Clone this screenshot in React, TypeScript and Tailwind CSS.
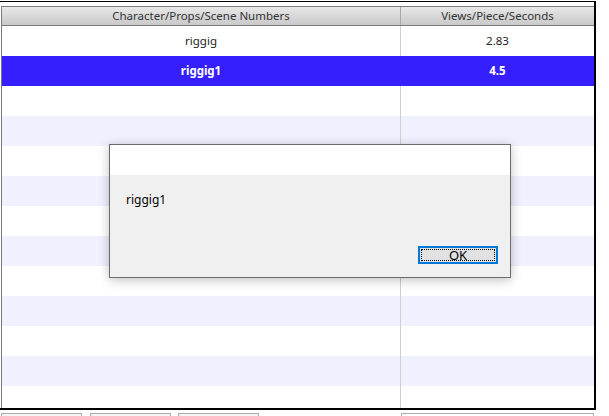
import React from "react";

interface Row {
  name: string;
  value: string;
}

const rows: Row[] = [
  { name: "riggig", value: "2.83" },
  { name: "riggig1", value: "4.5" },
];

const selectedIndex = 1;
const totalRows = 13;

export default function App() {
  const cells = Array.from({ length: totalRows }, (_, i) => rows[i] ?? null);

  return (
    <div
      className="relative w-[609px] h-[416px] overflow-hidden bg-white text-[11.5px] text-[#222]"
      style={{ fontFamily: '"Noto Sans", "Open Sans", sans-serif' }}
    >
      {/* table frame */}
      <div className="mt-px w-[596px] h-[409px] border-t border-r-2 border-b-2 border-black pt-[4px] overflow-hidden">
        <div className="ml-px h-full border-l border-t border-[#7a7a7a] overflow-hidden">
          {/* header */}
          <div className="grid grid-cols-[399px_1fr] h-[19px] border-b border-[#7a7a7a] bg-gradient-to-b from-[#e8e8e8] to-[#c9c9c9] text-[#333]">
            <div className="flex items-center justify-center border-r border-[#a9a9a9]">
              Character/Props/Scene Numbers
            </div>
            <div className="flex items-center justify-center">Views/Piece/Seconds</div>
          </div>

          {/* body */}
          {cells.map((row, i) => {
            const selected = i === selectedIndex;
            const bg = selected ? "bg-[#361fff]" : i % 2 === 1 ? "bg-[#f0f0fe]" : "bg-white";
            return (
              <div key={i} className={`grid grid-cols-[399px_1fr] h-[30px] ${bg}`}>
                <div
                  className={`flex items-center justify-center border-r ${
                    selected ? "border-[#361fff] text-white font-bold" : "border-[#cfcfcf]"
                  }`}
                >
                  {row?.name}
                </div>
                <div className={`flex items-center justify-center ${selected ? "text-white font-bold" : ""}`}>
                  {row?.value}
                </div>
              </div>
            );
          })}
        </div>
      </div>

      {/* buttons below, cut off by the window */}
      <div className="flex mt-[3px]">
        <div className="ml-px w-[81px] h-[20px] border border-[#adadad] bg-[#f3f3f3]" />
        <div className="ml-[8px] w-[81px] h-[20px] border border-[#adadad] bg-[#f3f3f3]" />
        <div className="ml-[7px] w-[81px] h-[20px] border border-[#adadad] bg-[#f3f3f3]" />
        <div className="ml-[142px] w-[193px] h-[20px] border border-[#adadad] bg-white" />
      </div>

      {/* message dialog */}
      <div className="absolute left-[109px] top-[144px] w-[402px] h-[134px] border border-[#6b6b6b] bg-[#f0f0f0] flex flex-col shadow-[0_2px_10px_rgba(0,0,0,0.25)]">
        <div className="h-[30px] bg-white" />
        <div className="flex-1 flex flex-col justify-between pl-4 pr-[12px] pt-[18px] pb-[13px]">
          <div className="text-[12px] text-black leading-[14px]">riggig1</div>
          <div className="flex justify-end">
            <button
              className="w-[80px] h-[18px] border-2 border-[#0078d7] bg-[#e1e1e1] p-px"
              style={{ fontFamily: '"Noto Sans", sans-serif' }}
            >
              <div className="h-full w-full border border-dotted border-black flex items-center justify-center text-[13px] leading-none text-black">
                OK
              </div>
            </button>
          </div>
        </div>
      </div>
    </div>
  );
}
